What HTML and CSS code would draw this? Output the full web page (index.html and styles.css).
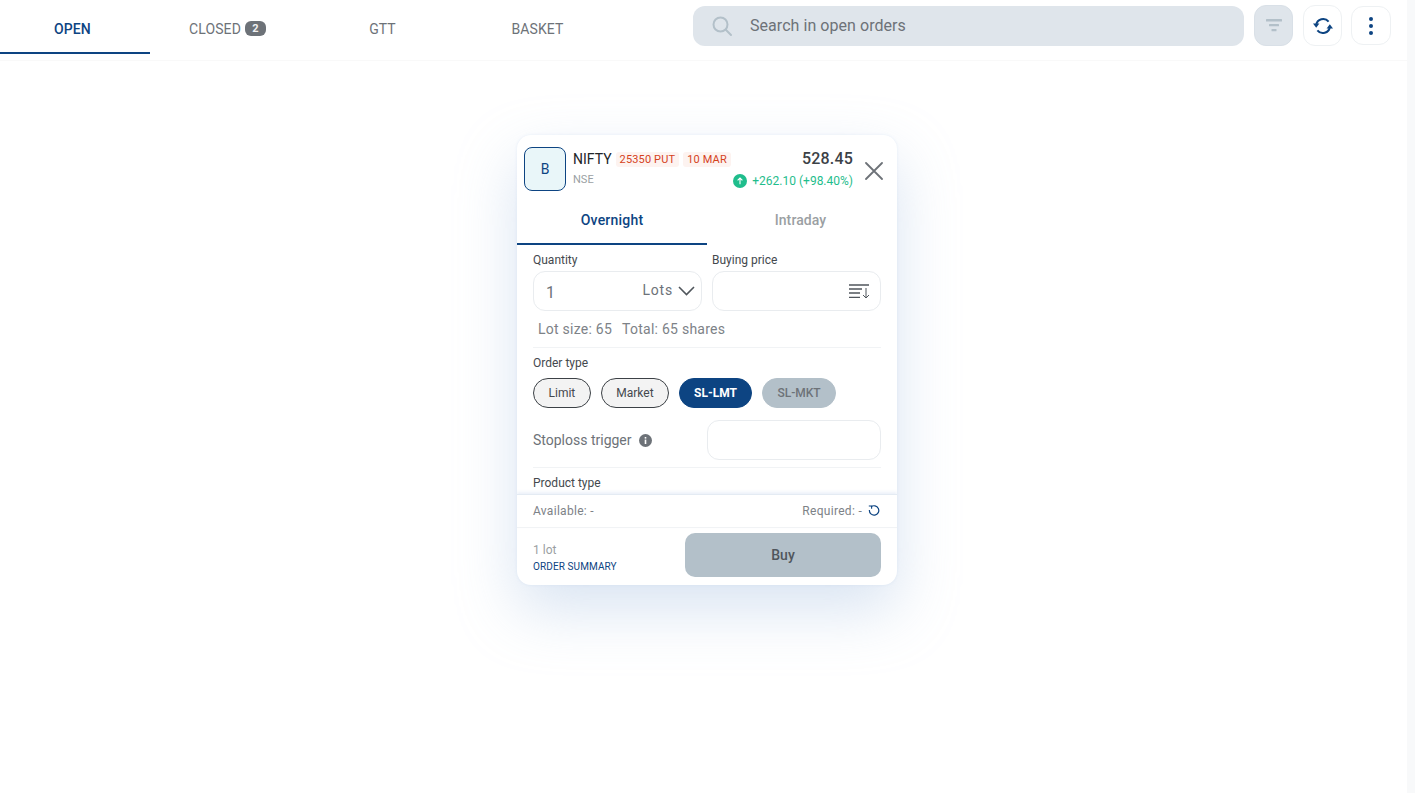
FILE: index.html
```html
<!DOCTYPE html>
<html lang="en">
<head>
    <meta charset="UTF-8">
    <meta name="viewport" content="width=device-width, initial-scale=1.0">
    <title>Orders</title>
    <link rel="stylesheet" href="styles.css">
</head>
<body>
    <div class="page">
        <header class="top-bar">
            <nav class="top-tabs">
                <a class="top-tab active first">OPEN</a>
                <a class="top-tab">CLOSED <span class="count">2</span></a>
                <a class="top-tab">GTT</a>
                <a class="top-tab">BASKET</a>
            </nav>
            <div class="search-box">
                <svg class="search-icon" width="22" height="22" viewBox="0 0 22 22" fill="none" stroke="#b3c0c9" stroke-width="2" stroke-linecap="round">
                    <circle cx="9.5" cy="9.5" r="7"/>
                    <path d="M14.8 14.8 L20 20"/>
                </svg>
                <span class="search-text">Search in open orders</span>
            </div>
            <button class="icon-btn filter-btn" title="Filter">
                <svg width="16" height="13" viewBox="0 0 16 13" fill="#b3c0c9">
                    <rect x="0" y="0" width="16" height="2.4" rx="0.5"/>
                    <rect x="3" y="5" width="10" height="2.2" rx="0.5"/>
                    <rect x="5.5" y="10" width="5" height="2.2" rx="0.5"/>
                </svg>
            </button>
            <button class="icon-btn refresh-btn" title="Refresh">
                <svg width="20" height="18" viewBox="0 0 20 18" fill="none" stroke="#0d4482" stroke-width="2">
                    <path d="M3.2 8 A7 7 0 0 1 15.6 4.6"/>
                    <path d="M16.8 10 A7 7 0 0 1 4.4 13.4"/>
                    <path d="M0 6.6 L6.4 6.6 L3.2 10.8 Z" fill="#0d4482" stroke="none"/>
                    <path d="M13.6 11.4 L20 11.4 L16.8 7.2 Z" fill="#0d4482" stroke="none"/>
                </svg>
            </button>
            <button class="icon-btn menu-btn" title="More">
                <svg width="6" height="18" viewBox="0 0 6 18" fill="#0d4482">
                    <circle cx="3" cy="2" r="2"/>
                    <circle cx="3" cy="9" r="2"/>
                    <circle cx="3" cy="16" r="2"/>
                </svg>
            </button>
        </header>
    </div>
    <div class="scroll-track"></div>

    <section class="order-card">
        <div class="card-head">
            <div class="side-box">B</div>
            <div class="instrument">
                <div class="name-row">
                    <span class="symbol">NIFTY</span>
                    <span class="chip">25350 PUT</span>
                    <span class="chip">10 MAR</span>
                </div>
                <div class="exchange">NSE</div>
            </div>
            <div class="quote">
                <div class="price">528.45</div>
                <div class="change">
                    <svg width="14" height="14" viewBox="0 0 14 14">
                        <circle cx="7" cy="7" r="7" fill="#1fbd8c"/>
                        <path d="M7 10.3 V4.2 M4.6 6.4 L7 4 L9.4 6.4" fill="none" stroke="#fff" stroke-width="1.1"/>
                    </svg>
                    <span>+262.10 (+98.40%)</span>
                </div>
            </div>
            <svg class="close-icon" width="18" height="18" viewBox="0 0 18 18" stroke="#6d7278" stroke-width="1.8" stroke-linecap="round">
                <path d="M1 1 L17 17 M17 1 L1 17"/>
            </svg>
        </div>

        <div class="product-tabs">
            <a class="product-tab active">Overnight</a>
            <a class="product-tab">Intraday</a>
        </div>

        <div class="card-body">
            <div class="field-row">
                <div class="field">
                    <label>Quantity</label>
                    <div class="input-box qty-box">
                        <span class="qty">1</span>
                        <span class="unit">Lots</span>
                        <svg width="17" height="10" viewBox="0 0 17 10" fill="none" stroke="#50565c" stroke-width="1.6">
                            <path d="M1 1 L8.5 8.5 L16 1"/>
                        </svg>
                    </div>
                </div>
                <div class="field">
                    <label>Buying price</label>
                    <div class="input-box price-box">
                        <svg width="21" height="15" viewBox="0 0 21 15" fill="none" stroke="#50565c" stroke-width="1.3">
                            <path d="M0 1 H20 M0 5 H13 M0 9 H11 M0 13.4 H11"/>
                            <path d="M17 4 V14 M14 11 L17 14 L20 11" stroke-width="1"/>
                        </svg>
                    </div>
                </div>
            </div>
            <div class="lot-info">
                <span>Lot size: 65</span>
                <span>Total: 65 shares</span>
            </div>

            <div class="section">
                <label>Order type</label>
                <div class="pills">
                    <span class="pill">Limit</span>
                    <span class="pill">Market</span>
                    <span class="pill selected">SL-LMT</span>
                    <span class="pill disabled">SL-MKT</span>
                </div>
                <div class="trigger-row">
                    <div class="trigger-label">
                        <span>Stoploss trigger</span>
                        <svg width="13" height="13" viewBox="0 0 13 13">
                            <circle cx="6.5" cy="6.5" r="6.5" fill="#6d7278"/>
                            <rect x="5.7" y="5.6" width="1.6" height="4.4" fill="#fff"/>
                            <rect x="5.7" y="3" width="1.6" height="1.6" fill="#fff"/>
                        </svg>
                    </div>
                    <div class="input-box trigger-box"></div>
                </div>
            </div>

            <div class="section product-section">
                <label>Product type</label>
            </div>
        </div>

        <div class="margin-row">
            <span>Available: -</span>
            <span class="required">
                Required: -
                <svg width="12" height="12" viewBox="0 0 12 12" fill="none" stroke="#0d4482" stroke-width="1.2">
                    <path d="M3 1.9 A4.7 4.7 0 1 1 1.4 5"/>
                    <path d="M0.8 1 L3.6 1 L3.6 3.8" stroke-width="1.1"/>
                </svg>
            </span>
        </div>

        <div class="card-foot">
            <div class="summary">
                <div class="lots">1 lot</div>
                <a class="summary-link">ORDER SUMMARY</a>
            </div>
            <button class="buy-btn">Buy</button>
        </div>
    </section>
</body>
</html>
```

FILE: styles.css
```css
* {
    box-sizing: border-box;
}
body {
    margin: 0;
    height: 793px;
    overflow: hidden;
    display: flex;
    background-color: #fff;
    font-family: Roboto, "Liberation Sans", sans-serif;
    color: #3c4146;
}
label {
    display: block;
    font-size: 12px;
    line-height: 14px;
    color: #44494e;
}
.page {
    flex: 1;
}
.scroll-track {
    width: 8px;
    background-color: #f8f9fa;
}
.top-bar {
    height: 61px;
    display: flex;
    padding: 5px 16px 0 0;
    border-bottom: 1px solid #f9f9f9;
    align-items: flex-start;
}
.top-tabs {
    display: flex;
    width: 693px;
    margin-top: -5px;
}
.top-tab {
    width: 155px;
    height: 54px;
    display: flex;
    align-items: center;
    justify-content: center;
    gap: 4px;
    padding-top: 5px;
    font-size: 14px;
    letter-spacing: 0.1px;
    color: #6d7278;
    border-bottom: 2px solid transparent;
}
.top-tab.first {
    width: 150px;
    padding-right: 5px;
}
.top-tab.active {
    color: #0d4482;
    font-weight: 500;
    border-bottom-color: #0d4482;
}
.count {
    width: 21px;
    height: 15px;
    border-radius: 6px;
    background-color: #6d7278;
    color: #f0f0f0;
    font-size: 11px;
    font-weight: 700;
    line-height: 15px;
    text-align: center;
}
.search-box {
    width: 551px;
    height: 40px;
    margin-top: 1px;
    display: flex;
    align-items: center;
    gap: 17px;
    padding-left: 18px;
    background-color: #dfe5eb;
    border-radius: 12px;
    font-size: 16px;
    color: #6d7278;
}
.search-text {
    margin-bottom: 2px;
    letter-spacing: 0.05px;
}
.icon-btn {
    display: flex;
    align-items: center;
    justify-content: center;
    padding: 0;
    width: 39px;
    height: 41px;
    border: 1px solid #eef1f3;
    border-radius: 12px;
    background-color: #fff;
}
.filter-btn {
    margin-left: 10px;
    background-color: #dfe5eb;
    border-color: #d9e0e7;
}
.refresh-btn {
    margin-left: 10px;
}
.menu-btn {
    margin-left: 9px;
    width: 40px;
    height: 39px;
    margin-top: 1px;
}

/* order window */
.order-card {
    position: absolute;
    left: 517px;
    top: 135px;
    width: 380px;
    height: 450px;
    display: flex;
    flex-direction: column;
    background-color: #fff;
    border-radius: 14px;
    box-shadow: 0 25px 60px rgba(165, 190, 225, 0.42), 0 0 3px rgba(170, 195, 230, 0.25);
    overflow: hidden;
}
.card-head {
    height: 63px;
    flex: none;
    display: flex;
    padding: 12px 14px 0 7px;
}
.side-box {
    width: 42px;
    height: 44px;
    display: flex;
    align-items: center;
    justify-content: center;
    border: 1px solid #0d4482;
    border-radius: 8px;
    background-color: #e9f6f9;
    color: #0d4482;
    font-size: 14px;
}
.instrument {
    margin-left: 7px;
    padding-top: 4px;
}
.name-row {
    display: flex;
    align-items: center;
    gap: 4px;
}
.symbol {
    font-size: 14px;
    color: #212529;
}
.chip {
    padding: 0 4px;
    height: 15px;
    line-height: 15px;
    font-size: 11px;
    letter-spacing: 0.15px;
    border-radius: 3px;
    background-color: #fdf3f0;
    color: #d5421c;
}
.exchange {
    margin-top: 6px;
    font-size: 11px;
    color: #9b9fa3;
}
.quote {
    flex: 1;
    text-align: right;
    padding-top: 2px;
}
.price {
    font-size: 16px;
    font-weight: 500;
    letter-spacing: 0.2px;
    line-height: 19px;
    color: #3c4146;
}
.change {
    margin-top: 6px;
    display: flex;
    align-items: center;
    justify-content: flex-end;
    gap: 5px;
    font-size: 12px;
    white-space: nowrap;
    color: #1fbd8c;
}
.close-icon {
    margin: 15px 0 0 12px;
}
.product-tabs {
    height: 47px;
    flex: none;
    display: flex;
}
.product-tab {
    width: 190px;
    display: flex;
    align-items: center;
    justify-content: center;
    padding: 0 3px 2px 0;
    font-size: 14px;
    font-weight: 500;
    letter-spacing: 0.1px;
    color: #9b9fa3;
    border-bottom: 2px solid transparent;
}
.product-tab.active {
    padding-right: 0;
    letter-spacing: 0.2px;
    color: #0d4482;
    border-bottom-color: #0d4482;
}
.card-body {
    flex: 1;
    overflow: hidden;
    padding: 8px 16px 0;
}
.field-row {
    display: flex;
    gap: 10px;
}
.field {
    width: 169px;
}
.field label {
    margin-bottom: 4px;
}
.input-box {
    height: 40px;
    border: 1px solid #e9ecef;
    border-radius: 12px;
    background-color: #fff;
    display: flex;
    align-items: center;
}
.qty-box {
    padding: 0 6px 0 12px;
}
.qty {
    flex: 1;
    font-size: 16px;
    color: #6d7278;
    padding-top: 2px;
}
.unit {
    font-size: 14px;
    letter-spacing: 0.8px;
    color: #6d7278;
    margin-right: 5px;
    padding-bottom: 2px;
}
.price-box {
    justify-content: flex-end;
    padding-right: 10px;
}
.lot-info {
    display: flex;
    gap: 10px;
    height: 36px;
    padding: 10px 5px 0;
    font-size: 14px;
    line-height: 16px;
    letter-spacing: 0.25px;
    color: #7d8287;
}
.section {
    border-top: 1px solid #f1f3f5;
    padding-top: 8px;
}
.pills {
    display: flex;
    gap: 10px;
    margin-top: 8px;
}
.pill {
    height: 30px;
    padding: 0 14.5px;
    display: flex;
    align-items: center;
    border: 1px solid #3c4146;
    border-radius: 15px;
    background-color: #f3f3f3;
    font-size: 12px;
    color: #44494e;
}
.pill.selected {
    padding: 0 14px;
    background-color: #0d4482;
    border-color: #0d4482;
    color: #fff;
    font-weight: 700;
}
.pill.disabled {
    background-color: #b3c0c9;
    border-color: #b3c0c9;
    color: #6d7278;
    font-weight: 500;
}
.trigger-row {
    display: flex;
    align-items: center;
    justify-content: space-between;
    margin: 12px 0 7px;
}
.trigger-label {
    display: flex;
    align-items: center;
    gap: 7px;
    font-size: 14px;
    color: #6d7278;
}
.trigger-box {
    width: 174px;
}
.product-section {
    color: #44494e;
}
.margin-row {
    height: 34px;
    flex: none;
    display: flex;
    align-items: center;
    justify-content: space-between;
    padding: 0 17px 0 16px;
    border-top: 1px solid #e4ebf3;
    border-bottom: 1px solid #f1f3f5;
    box-shadow: 0 -2px 3px rgba(180, 200, 230, 0.25);
    font-size: 12px;
    letter-spacing: 0.3px;
    color: #7d8287;
    background-color: #fff;
}
.required {
    display: flex;
    align-items: center;
    gap: 6px;
}
.card-foot {
    flex: none;
    height: 57px;
    display: flex;
    align-items: flex-start;
    justify-content: space-between;
    padding: 5px 16px 0;
}
.summary {
    padding-top: 10px;
}
.lots {
    font-size: 12px;
    line-height: 14px;
    color: #9b9fa3;
}
.summary-link {
    display: block;
    margin-top: 4px;
    font-size: 10px;
    line-height: 12px;
    letter-spacing: 0.1px;
    color: #0d4482;
}
.buy-btn {
    width: 196px;
    height: 44px;
    border: none;
    border-radius: 10px;
    background-color: #b3c0c9;
    color: #50565c;
    font-family: inherit;
    font-size: 14px;
    font-weight: 500;
}
```
